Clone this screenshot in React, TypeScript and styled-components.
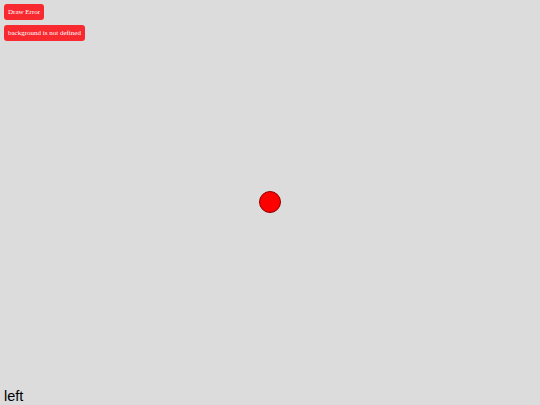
import React from "react";
import styled, { createGlobalStyle } from "styled-components";

const Global = createGlobalStyle`
  html, body { margin: 0; padding: 0; background: #dcdcdc; }
  body { font-family: "Liberation Serif", serif; }
`;

const Page = styled.div`
  width: 540px;
  height: 405px;
  display: flex;
  flex-direction: column;
  position: relative;
  overflow: hidden;
`;

const ErrorList = styled.div`
  display: flex;
  flex-direction: column;
  align-items: flex-start;
  gap: 5px;
  padding: 4px 0 0 4px;
`;

const ErrorBadge = styled.div`
  background: #f8292f;
  color: #fff;
  font-family: "Liberation Serif", serif;
  font-size: 7px;
  line-height: 16px;
  height: 16px;
  padding: 0 4px;
  border-radius: 3px;
  white-space: nowrap;
`;

const Canvas = styled.div`
  flex: 1;
  position: relative;
`;

const Ball = styled.div`
  position: absolute;
  left: 259px;
  top: 191px;
  width: 20px;
  height: 20px;
  border-radius: 50%;
  background: #ff0000;
  border: 1px solid #8a0000;
`;

const Label = styled.div`
  font-family: "Liberation Sans", Arial, sans-serif;
  font-size: 14.5px;
  line-height: 17px;
  color: #000;
  padding: 0 0 0 4px;
  height: 17px;
`;

export default function App() {
  return (
    <>
      <Global />
      <Page>
        <Canvas>
          <ErrorList>
            <ErrorBadge>Draw Error</ErrorBadge>
            <ErrorBadge>background is not defined</ErrorBadge>
          </ErrorList>
          <Ball />
        </Canvas>
        <Label>left</Label>
      </Page>
    </>
  );
}
